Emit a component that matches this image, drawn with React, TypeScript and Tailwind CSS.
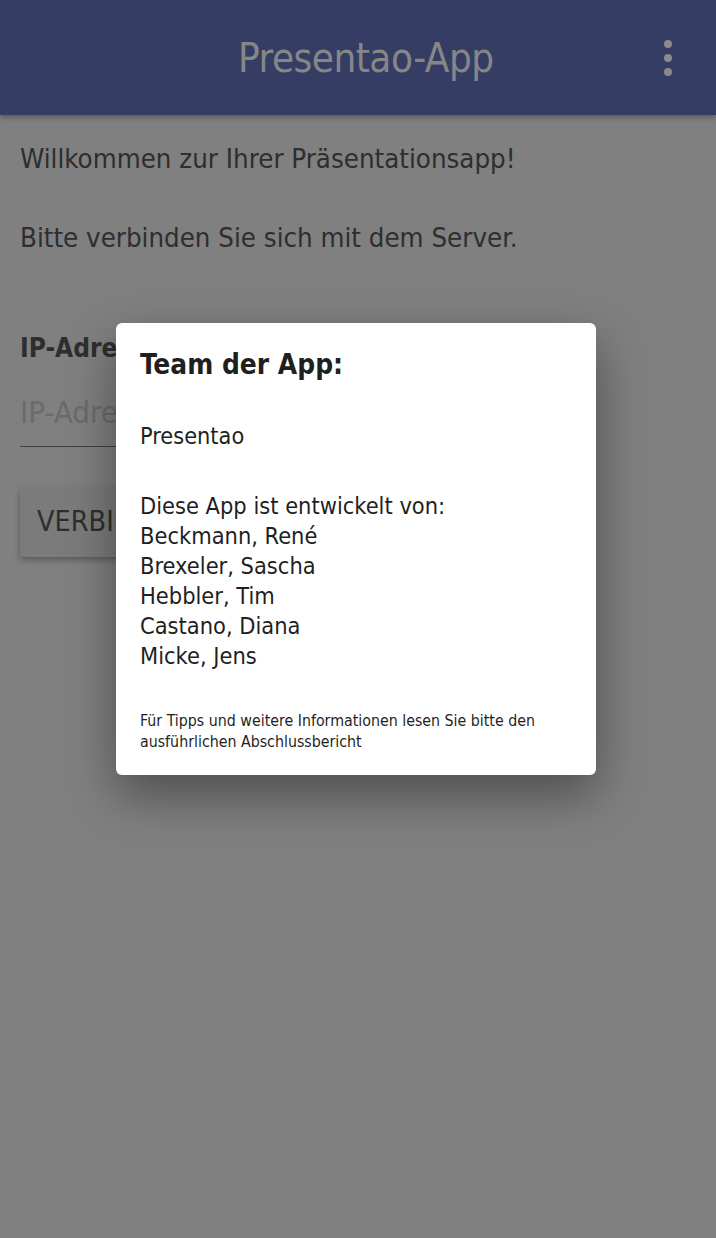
import React from "react";

const font = { fontFamily: '"DejaVu Sans Condensed", "DejaVu Sans", sans-serif' };

export default function App() {
  return (
    <div className="relative w-[716px] h-[1238px] overflow-hidden bg-[#808080]" style={font}>
      {/* App bar */}
      <header className="relative h-[115px] bg-[#363d64] flex items-center pl-[238px] shadow-[0_2px_6px_rgba(0,0,0,0.35)]">
        <h1 className="text-[40px] text-[#868686] font-normal tracking-[-0.5px]">Presentao-App</h1>
        <div className="absolute right-[44px] top-[40px] flex flex-col gap-[6px]">
          <span className="block w-[8px] h-[8px] rounded-full bg-[#8a8a8a]" />
          <span className="block w-[8px] h-[8px] rounded-full bg-[#8a8a8a]" />
          <span className="block w-[8px] h-[8px] rounded-full bg-[#8a8a8a]" />
        </div>
      </header>

      {/* Page content */}
      <main className="px-5 pt-[24px] text-[#2e2e2e]">
        <p className="text-[27.4px] leading-[40px]">Willkommen zur Ihrer Präsentationsapp!</p>
        <p className="text-[27.4px] leading-[40px] mt-[39px]">Bitte verbinden Sie sich mit dem Server.</p>
        <p className="text-[26px] leading-[36px] font-bold mt-[72px]">IP-Adresse:</p>
        <div className="mt-[26px] w-[420px] border-b border-[#404040] pb-[14px]">
          <span className="block text-[31px] leading-[40px] text-[#6b6b6b]">IP-Adresse</span>
        </div>
        <button className="mt-[40px] h-[70px] px-[17px] bg-[#7b7b7b] rounded-[3px] shadow-[0_3px_6px_rgba(0,0,0,0.3)] text-[28.5px] text-[#2e2e2e]">
          VERBINDEN
        </button>
      </main>

      {/* Dialog */}
      <div className="absolute left-[116px] top-[323px] w-[480px] h-[452px] bg-white rounded-[6px] shadow-[0_20px_50px_rgba(0,0,0,0.4)] px-6 pt-[24px] text-[#1f1f1f]">
        <h2 className="text-[27.8px] leading-[36px] font-bold">Team der App:</h2>
        <p className="text-[23.3px] leading-[30px] mt-[38px]">Presentao</p>
        <div className="text-[23.4px] leading-[30px] mt-[40px]">
          <p>Diese App ist entwickelt von:</p>
          <p>Beckmann, René</p>
          <p>Brexeler, Sascha</p>
          <p>Hebbler, Tim</p>
          <p>Castano, Diana</p>
          <p>Micke, Jens</p>
        </div>
        <p className="text-[15.8px] leading-[21px] mt-[39px]">
          Für Tipps und weitere Informationen lesen Sie bitte den ausführlichen Abschlussbericht
        </p>
      </div>
    </div>
  );
}
